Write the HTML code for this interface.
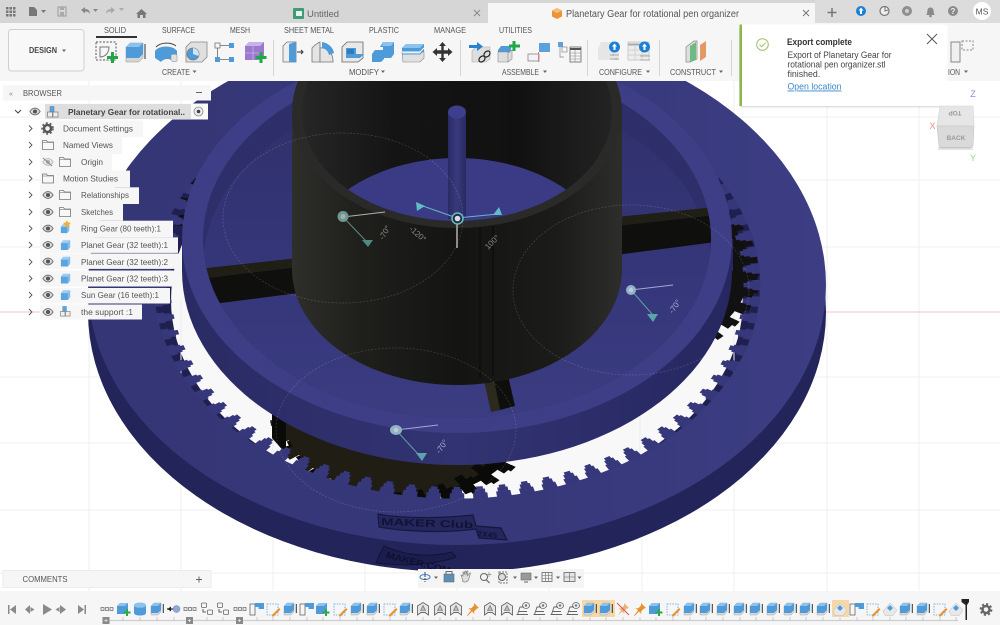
<!DOCTYPE html>
<html><head><meta charset="utf-8"><title>Planetary Gear</title>
<style>html,body{margin:0;padding:0;background:#fff;width:1000px;height:625px;overflow:hidden}svg{display:block}text{font-family:"Liberation Sans",sans-serif}</style></head>
<body>
<svg width="1000" height="625" viewBox="0 0 1000 625" xmlns="http://www.w3.org/2000/svg">
<defs>
<linearGradient id="cyl" x1="0" x2="1" y1="0" y2="0"><stop offset="0" stop-color="#2e2e2b"/><stop offset=".2" stop-color="#1f1f1c"/><stop offset=".5" stop-color="#141413"/><stop offset=".8" stop-color="#1b1b19"/><stop offset="1" stop-color="#2d2d2b"/></linearGradient>
<linearGradient id="inw" x1="0" x2="1" y1="0" y2="0"><stop offset="0" stop-color="#262626"/><stop offset=".3" stop-color="#141414"/><stop offset=".7" stop-color="#111"/><stop offset="1" stop-color="#232323"/></linearGradient>
<linearGradient id="pin" x1="0" x2="1" y1="0" y2="0"><stop offset="0" stop-color="#2a2b66"/><stop offset=".5" stop-color="#383a7c"/><stop offset="1" stop-color="#292a62"/></linearGradient>
<linearGradient id="dtop" x1="0" x2="1" y1="0" y2="0"><stop offset="0" stop-color="#353676"/><stop offset=".6" stop-color="#37387a"/><stop offset="1" stop-color="#3c3d83"/></linearGradient>
<linearGradient id="cside" x1="0" x2="1" y1="0" y2="0"><stop offset="0" stop-color="#2a2b64"/><stop offset=".5" stop-color="#323372"/><stop offset="1" stop-color="#262760"/></linearGradient>
<linearGradient id="flr" x1="0" x2="0" y1="0" y2="1"><stop offset="0" stop-color="#2f3068"/><stop offset=".5" stop-color="#35367a"/><stop offset="1" stop-color="#3c3d82"/></linearGradient>
<clipPath id="lens"><ellipse cx="457" cy="112" rx="155" ry="109"/></clipPath>
<clipPath id="rimc"><ellipse cx="457" cy="239" rx="254" ry="179"/></clipPath>
<clipPath id="view"><rect x="0" y="81" width="1000" height="510"/></clipPath>

<g id="dteeth" fill="none">
<circle r="299.5" stroke-width="8" stroke-dasharray="14.6 8.922" stroke-dashoffset="7.3"/>
<circle r="293" stroke-width="6" stroke-dasharray="10.5 12.512" stroke-dashoffset="5.25"/>
<circle r="288.5" stroke-width="4" stroke-dasharray="6.5 16.159" stroke-dashoffset="3.25"/>
</g>

<symbol id="eye" viewBox="0 0 14 10"><path d="M1 5C3 2 5 1 7 1s4 1 6 4c-2 3-4 4-6 4S3 8 1 5z" fill="#dcdcdc" stroke="#666" stroke-width="1"/><circle cx="7" cy="5" r="2.4" fill="#555"/></symbol>
<symbol id="fold" viewBox="0 0 12 10"><path d="M.5 9.5V.5h4l1 1.5h6v7.5z" fill="#f7f7f7" stroke="#777" stroke-width=".8"/><path d="M.5 2.5h11" stroke="#777" stroke-width=".6"/></symbol>
<symbol id="cube" viewBox="0 0 12 12"><path d="M1 4l2.5-3H11v7.5L8.5 11.500H1z" fill="#5aa5e0"/><path d="M8.500 4L11 1v7.500l-2.500 3z" fill="#86bdea"/><path d="M1 4l2.500-3H11L8.500 4z" fill="#9ccdf2"/></symbol>
<symbol id="comp" viewBox="0 0 12 12"><rect x="3" y=".5" width="4" height="5" fill="#5aa5e0" stroke="#4a7ea8" stroke-width=".5"/><rect x=".5" y="6" width="5" height="5" fill="#eee" stroke="#777" stroke-width=".7"/><rect x="6" y="6" width="5" height="5" fill="#eee" stroke="#777" stroke-width=".7"/></symbol>

<symbol id="e" viewBox="0 0 16 16"><path d="M2 5l3-3h7v9l-3 3H2z" fill="#d8d8d8" stroke="#aaa" stroke-width=".5"/><path d="M2 5l3-3h7v7l-3 3H2z" fill="#4f9bd9"/><path d="M2 5l3-3h7L9 5z" fill="#8cc3ee"/><path d="M14.300 3v9" stroke="#333" stroke-width="1"/></symbol>
<symbol id="n" viewBox="0 0 16 16"><path d="M1 5l3-3h8v8l-3 3H1z" fill="#4f9bd9"/><path d="M1 5l3-3h8L9 5z" fill="#8cc3ee"/><path d="M11 8v7M7.500 11.500h7" stroke="#2aa84a" stroke-width="2"/></symbol>
<symbol id="c" viewBox="0 0 16 16"><ellipse cx="8" cy="4" rx="6" ry="2.500" fill="#8cc3ee"/><path d="M2 4v8c0 1.500 2.500 2.500 6 2.500s6-1 6-2.500V4c0 1.500-2.500 2.500-6 2.500S2 5.500 2 4z" fill="#4f9bd9"/></symbol>
<symbol id="j" viewBox="0 0 16 16"><path d="M1 8h6" stroke="#222" stroke-width="1.200"/><path d="M5 5.500v5L1.500 8z" fill="#222"/><circle cx="10.500" cy="8" r="3.500" fill="#8ea7d8" stroke="#6f88b8" stroke-width=".5"/></symbol>
<symbol id="o" viewBox="0 0 16 16"><g fill="#eee" stroke="#777" stroke-width=".8"><rect x="2" y="6.500" width="3" height="3"/><rect x="6.500" y="6.500" width="3" height="3"/><rect x="11" y="6.500" width="3" height="3"/></g></symbol>
<symbol id="l" viewBox="0 0 16 16"><g fill="#f5f5f5" stroke="#666" stroke-width=".8"><rect x="2.500" y="2" width="5" height="4.500" rx="1"/><rect x="8.500" y="9" width="5" height="4.500" rx="1"/></g><path d="M4 8v3h3" stroke="#333" fill="none" stroke-width=".8"/></symbol>
<symbol id="f" viewBox="0 0 16 16"><rect x="1" y="3" width="5" height="11" fill="#f6f6f6" stroke="#666" stroke-width=".8"/><path d="M6 2h9v6H9.500V6H6z" fill="#4f9bd9"/></symbol>
<symbol id="s" viewBox="0 0 16 16"><rect x="2" y="3" width="11" height="11" fill="none" stroke="#5aa0d6" stroke-width=".8" stroke-dasharray="1.500 1.200"/><path d="M7 14l7-7 1.500 1.500-7 7H7z" fill="#e8932e"/></symbol>
<symbol id="a" viewBox="0 0 16 16"><path d="M2.500 14V5l5.500-3.500L13.500 5v9L10 11.500H6z" fill="#e6e6e6" stroke="#666" stroke-width=".9"/><path d="M8 4.500l2.500 5h-5z" fill="#bbb" stroke="#666" stroke-width=".6"/></symbol>
<symbol id="p" viewBox="0 0 16 16"><path d="M9 2l5 5-2 .5-3 3 .5 2.500L7 10.500 2.500 15 2 14.500 6 9.500 3.500 7l2.500.5 3-3z" fill="#e8912f"/></symbol>
<symbol id="x" viewBox="0 0 16 16"><path d="M9 2l5 5-2 .5-3 3 .5 2.500L7 10.500 3 14.500 6 9.500 3.500 7l2.500.5 3-3z" fill="#ecb27a"/><path d="M2 2l12 12" stroke="#d9534f" stroke-width="1"/></symbol>
<symbol id="k" viewBox="0 0 16 16"><ellipse cx="11" cy="4.500" rx="3.500" ry="3" fill="#eee" stroke="#666" stroke-width=".8"/><circle cx="11" cy="4.500" r="1.200" fill="#777"/><path d="M2.500 13.500L5 6h4M1.500 13.500H13M3 10.500h9" fill="none" stroke="#666" stroke-width=".9"/></symbol>
<symbol id="g" viewBox="0 0 16 16"><path d="M1 10l7-8 7 7-4 5.500H3z" fill="#e8e8e8" stroke="#bbb" stroke-width=".5"/><path d="M5 7l3-3 3 3-3 3zM7 7l1-1 1 1-1 1z" fill="#4f9bd9"/></symbol>
</defs>

<!-- background grid -->
<rect width="1000" height="625" fill="#fff"/>
<g stroke="#efefef" stroke-width="1">
<path d="M89 80V600M181 80V600M273 80V600M365 80V600M457 80V600M549 80V600M642 80V600M734 80V600M827 80V600M919 80V600"/>
<path d="M0 117H1000M0 180H1000M0 247H1000M0 377H1000M0 443H1000M0 510H1000M0 573H1000"/>
</g>
<path d="M0 312H1000" stroke="#f2c6cc" stroke-width="1"/>

<g clip-path="url(#view)">
<!-- outer ring side + hole wall -->
<ellipse cx="457" cy="312" rx="369" ry="260" fill="#23245a"/>
<ellipse cx="457" cy="285" rx="303" ry="213.600" fill="#1f2050"/>
<ellipse cx="457" cy="300" rx="286" ry="202" fill="#f8f8f8"/>
<path d="M273 300V480M181 300V420M734 300V420M640 300V480" stroke="#ececec" stroke-width="1"/>

<!-- planet gears -->
<g transform="translate(408 418) scale(1 .68)" fill="#0a0a09" stroke="#0a0a09"><circle r="117"/><circle r="121" fill="none" stroke-width="10" stroke-dasharray="14 9.76"/><circle r="127" fill="none" stroke-width="5" stroke-dasharray="8 16.93"/></g>
<g transform="translate(392 408) scale(.95 .72)" fill="#1f1d14" stroke="#1f1d14"><circle r="117"/><circle r="121" fill="none" stroke-width="10" stroke-dasharray="14 9.76"/><circle r="127" fill="none" stroke-width="5" stroke-dasharray="8 16.93"/></g>
<path d="M272 414h14v40l-14-16z" fill="#0a0a09"/>
<g transform="translate(632 270) scale(1 .72)" fill="#111" stroke="#111"><circle r="117"/><circle r="121" fill="none" stroke-width="10" stroke-dasharray="14 9.76"/><circle r="127" fill="none" stroke-width="5" stroke-dasharray="8 16.93"/></g>
<g transform="translate(305 208) scale(1 .72)" fill="#111" stroke="#111"><circle r="117"/><circle r="121" fill="none" stroke-width="10" stroke-dasharray="14 9.76"/><circle r="127" fill="none" stroke-width="5" stroke-dasharray="8 16.93"/></g>

<!-- outer ring top face -->
<path fill-rule="evenodd" fill="url(#dtop)" d="M88 285a369 260 0 1 0 738 0a369 260 0 1 0-738 0zM154 285a303 213.600 0 1 1 606 0a303 213.600 0 1 1-606 0z"/>
<g transform="translate(457 285) scale(1 .705)" stroke="#37387b"><use href="#dteeth"/></g>

<!-- logos -->
<g>
<path d="M378 514c20 4 60 5 95 1l3 11 25 2 6 12-28-2-3-9c-30 4-70 3-97-2z" fill="#25265c" stroke="#16173e" stroke-width="1.200"/>
<text x="381" y="525" font-size="10" font-weight="bold" fill="#111234" textLength="92" lengthAdjust="spacingAndGlyphs" transform="rotate(2 381 525)">MAKER Club</text>
<text x="477" y="536" font-size="7.500" font-weight="bold" fill="#111234" textLength="20" lengthAdjust="spacingAndGlyphs" transform="rotate(6 477 536)">2X45</text>
<path d="M384 546c-3 6-6 12-8 17 25 3 55 3 80-6l-4-5c-25 6-48 3-68-6z" fill="#1c1d4c" stroke="#121338" stroke-width="1"/>
<text x="388" y="558" font-size="9" font-weight="bold" fill="#0f1030" textLength="66" lengthAdjust="spacingAndGlyphs" transform="rotate(14 388 548)">MAKER.COM</text>
</g>

<!-- carrier plate -->
<ellipse cx="457" cy="271" rx="275" ry="194" fill="url(#cside)"/>
<path d="M182 239h551v32H182z" fill="url(#cside)"/>
<ellipse cx="457" cy="239" rx="275" ry="194" fill="#3d3e85"/>
<ellipse cx="457" cy="239" rx="254" ry="179" fill="#2d2e6a"/>
<g clip-path="url(#rimc)">
<ellipse cx="457" cy="266" rx="254" ry="179" fill="url(#flr)"/>
<!-- spokes -->
<path d="M198 269l100-11v9l-100 12z" fill="#201f16"/>
<path d="M198 279l100-12v26l-100 13z" fill="#0f0f0d"/>
<path d="M616 217l100-10v8l-100 11z" fill="#201f16"/>
<path d="M616 226l100-11v27l-100 13z" fill="#0f0f0d"/>
<path d="M480 362l10-2 10 50-9 2z" fill="#2b2a1c"/>
<path d="M490 360l14-2 11 48-15 4z" fill="#0e0e0d"/>
</g>

<!-- central cylinder -->
<path d="M292 112V269A165 116 0 0 0 622 269V112z" fill="url(#cyl)"/>
<path d="M480 228V378M493 226V376" stroke="#080808" stroke-width="1"/>
<ellipse cx="457" cy="112" rx="165" ry="116" fill="#2a2a28"/>
<ellipse cx="457" cy="112" rx="155" ry="109" fill="url(#inw)"/>
<ellipse cx="457" cy="267" rx="155" ry="109" fill="#3a3b84" clip-path="url(#lens)"/>
<rect x="448" y="112" width="18" height="107" fill="url(#pin)"/>
<ellipse cx="457" cy="112" rx="9" ry="6.500" fill="#3e3f8c"/>

<!-- construction circles -->
<g fill="none" stroke="#fff" stroke-opacity=".18" stroke-width=".7" stroke-dasharray="2 1.500">
<ellipse cx="343" cy="218" rx="120" ry="85"/>
<ellipse cx="631" cy="290" rx="118" ry="85"/>
<ellipse cx="396" cy="430" rx="120" ry="82"/>
</g>

<!-- joints -->
<g>
<path d="M343 217l42-5" stroke="#a9b5b0" stroke-width="1"/><path d="M343 217l23 24" stroke="#5d8c83" stroke-width="1"/><path d="M362 240h11l-5 7z" fill="#4f8a7e"/>
<circle cx="343" cy="216.500" r="5.500" fill="#6d9a90"/><circle cx="343" cy="216.500" r="2.500" fill="#a8b0ac"/>
<path d="M631 290l42-5" stroke="#a3a8d2" stroke-width="1"/><path d="M631 290l21 24" stroke="#5d9ca8" stroke-width="1"/><path d="M647 314h11l-5 8z" fill="#5aa4ac"/>
<circle cx="631" cy="290" r="5" fill="#8fb4c4"/><circle cx="631" cy="290" r="2.200" fill="#c3c8dc"/>
<path d="M396 430l42-5" stroke="#a3a8d2" stroke-width="1"/><path d="M396 430l22 24" stroke="#5d9ca8" stroke-width="1"/><path d="M416 453h11l-5 8z" fill="#5aa4ac"/>
<ellipse cx="396" cy="430" rx="6" ry="5" fill="#8fb4c4"/><circle cx="396" cy="430" r="2.200" fill="#c3c8dc"/>
<path d="M457 218L420 205M457 218l41-4" stroke="#62b6c8" stroke-width="1"/>
<path d="M457 219V248" stroke="#d8d8d8" stroke-width="1.200"/>
<path d="M416 202l9 4-8 5z" fill="#62bcc8"/><path d="M499 207l3 8-9 0z" fill="#62bcc8"/>
<circle cx="457.500" cy="218.500" r="5.500" fill="#27303c" stroke="#62bcc8" stroke-width="1.500"/><circle cx="457.500" cy="218.500" r="2.800" fill="#dcd9f0"/>
</g>
<g font-size="8" fill="#a9a9a9">
<text transform="translate(387 234) rotate(-60)" text-anchor="middle" fill="#8c8c8c">-70°</text>
<text transform="translate(416 236) rotate(42)" text-anchor="middle" fill="#8c8c8c">-120°</text>
<text transform="translate(494 244) rotate(-45)" text-anchor="middle" fill="#8c8c8c">100°</text>
<text transform="translate(677 308) rotate(-55)" text-anchor="middle" fill="#aeb0d4">-70°</text>
<text transform="translate(444 448) rotate(-55)" text-anchor="middle" fill="#aeb0d4">-70°</text>
</g>
</g>

<!-- top bar -->
<rect width="1000" height="23" fill="#d6d6d6"/>
<rect x="815" y="0" width="185" height="23" fill="#dcdcdc"/>
<rect x="488" y="3" width="327" height="20" fill="#f6f6f6"/>
<rect y="23" width="1000" height="58" fill="#f6f6f6"/>

<g fill="#777">
<path d="M6 7h2.500v2.500H6zM9.500 7H12v2.500H9.500zM13 7h2.500v2.500H13zM6 10.500h2.500V13H6zM9.500 10.500H12V13H9.500zM13 10.500h2.500V13H13zM6 14h2.500v2.500H6zM9.500 14H12v2.500H9.500zM13 14h2.500v2.500H13z"/>
<path d="M29 7h5l3 3v6h-8z"/><path d="M41 10h5l-2.500 3z"/>
<path d="M58 7h8v9h-8z" fill="none" stroke="#999"/><path d="M60 7h4v3h-4zM60 12h4v4h-4z" fill="#aaa"/>
<path d="M81 10l4-3v2c3 0 5 1.500 5 5-1-2-2.500-2.500-5-2.500v2z" fill="#888"/><path d="M93 9h5l-2.500 3z" fill="#888"/>
<path d="M115 10l-4-3v2c-3 0-5 1.500-5 5 1-2 2.500-2.500 5-2.500v2z" fill="#aaa"/><path d="M119 8h5l-2.500 3z" fill="#aaa"/>
<path d="M136 14l5.500-5 5.500 5h-1.500v4h-2.500v-3h-3v3h-2.500v-4z" fill="#777"/>
</g>
<rect x="293" y="8" width="11" height="11" fill="#3f9c76" rx="1"/><rect x="296" y="11" width="6" height="5" fill="#e8f2ee"/>
<text x="307" y="17" font-size="9.500" fill="#666" textLength="32" lengthAdjust="spacingAndGlyphs">Untitled</text>
<path d="M474 10l6 6M480 10l-6 6" stroke="#888" stroke-width="1"/>
<path d="M557 8l5 2.500v6L557 19l-5-2.500v-6z" fill="#ee9438"/><path d="M552 10.500l5 2.500 5-2.500-5-2.500z" fill="#f7bd7e"/>
<text x="566" y="17" font-size="10" fill="#555" textLength="173" lengthAdjust="spacingAndGlyphs">Planetary Gear for rotational pen organizer</text>
<path d="M803 10l6 6M809 10l-6 6" stroke="#777" stroke-width="1"/>
<path d="M832 8v9M827.500 12.500h9" stroke="#777" stroke-width="1.500"/>
<circle cx="861" cy="11" r="5" fill="#1c7fd6"/><path d="M861 7.500l2.500 3h-1.500v3.500h-2v-3.500h-1.500z" fill="#fff"/>
<circle cx="884.500" cy="11" r="4.500" fill="#eee" stroke="#777" stroke-width="1.200"/><path d="M885 7v4l3-1" fill="none" stroke="#777"/>
<circle cx="907" cy="11" r="5" fill="#8f8f8f"/><circle cx="907" cy="11" r="2" fill="#d0d0d0"/>
<path d="M926 15c1.500-1 1-3 1.500-5s2-2.500 3-2.500 2.500.500 3 2.500 0 4 1.500 5z" fill="#8a8a8a"/><circle cx="930.500" cy="16" r="1.300" fill="#8a8a8a"/>
<circle cx="953" cy="11" r="5" fill="#8a8a8a"/><text x="953" y="14" font-size="8" font-weight="bold" fill="#eee" text-anchor="middle">?</text>
<circle cx="982" cy="11" r="9" fill="#fff"/><text x="982" y="14.500" font-size="8.500" fill="#555" text-anchor="middle">MS</text>

<!-- toolbar -->
<rect x="8.500" y="29.500" width="75.500" height="41.500" rx="3" fill="#f8f8f8" stroke="#cfcfcf"/>
<text x="29" y="53" font-size="8.500" font-weight="bold" fill="#444" textLength="28" lengthAdjust="spacingAndGlyphs">DESIGN</text><path d="M62 49.500h4l-2 2.500z" fill="#666"/>
<g font-size="8.200" fill="#555">
<text x="104" y="33" textLength="22" lengthAdjust="spacingAndGlyphs">SOLID</text>
<text x="162" y="33" textLength="33" lengthAdjust="spacingAndGlyphs">SURFACE</text>
<text x="230" y="33" textLength="20" lengthAdjust="spacingAndGlyphs">MESH</text>
<text x="284" y="33" textLength="50" lengthAdjust="spacingAndGlyphs">SHEET METAL</text>
<text x="369" y="33" textLength="30" lengthAdjust="spacingAndGlyphs">PLASTIC</text>
<text x="434" y="33" textLength="32" lengthAdjust="spacingAndGlyphs">MANAGE</text>
<text x="499" y="33" textLength="33" lengthAdjust="spacingAndGlyphs">UTILITIES</text>
<text x="162" y="75" textLength="28" lengthAdjust="spacingAndGlyphs">CREATE</text>
<text x="349" y="75" textLength="30" lengthAdjust="spacingAndGlyphs">MODIFY</text>
<text x="502" y="75" textLength="37" lengthAdjust="spacingAndGlyphs">ASSEMBLE</text>
<text x="599" y="75" textLength="43" lengthAdjust="spacingAndGlyphs">CONFIGURE</text>
<text x="670" y="75" textLength="46" lengthAdjust="spacingAndGlyphs">CONSTRUCT</text>
<text x="948" y="75" textLength="12" lengthAdjust="spacingAndGlyphs">ION</text>
</g>
<g fill="#666"><path d="M192.500 70.500h4l-2 2.500zM381 70.500h4l-2 2.500zM543 70.500h4l-2 2.500zM646 70.500h4l-2 2.500zM719 70.500h4l-2 2.500zM964 70.500h4l-2 2.500z"/></g>
<rect x="96" y="36" width="41" height="2" fill="#333"/>
<path d="M273.500 40V76M460.500 40V76M587.500 40V76M659.500 40V76M731.500 40V76" stroke="#d5d5d5"/>

<!-- create -->
<rect x="96" y="42" width="20" height="18" fill="none" stroke="#555" stroke-width="1" stroke-dasharray="2 1.500"/><path d="M100 47h9c0 6-4 10-9 10z" fill="none" stroke="#777"/><path d="M112.500 52v11M107 57.500h11" stroke="#1fa845" stroke-width="3"/>
<path d="M126 47l4-4h13v15l-4 4h-13z" fill="#d4d4d4" stroke="#999" stroke-width=".5"/><path d="M126 47l4-4h13v11l-4 4h-13z" fill="#4f9bd9"/><path d="M126 47l4-4h13l-4 4z" fill="#8cc3ee"/><path d="M145 44v15" stroke="#333"/>
<path d="M155 51c4-6 18-6 22 0v7l-4 4c-2-4-9-4-12 0l-6-4z" fill="#4f9bd9"/><path d="M171 55c1-1 5-1 6 0v6c-2 1-5 1-6-1z" fill="#e0e0e0" stroke="#888" stroke-width=".5"/><path d="M156 47c5-5 15-5 20-1" fill="none" stroke="#444" stroke-width="1"/>
<path d="M186 47l5-5h16v15l-5 5h-16z" fill="#e0e0e0" stroke="#888" stroke-width=".8"/><circle cx="193" cy="54" r="6" fill="#4f9bd9" stroke="#777" stroke-width=".8"/><path d="M193 54v-6a6 6 0 0 1 5.500 8z" fill="#cfe4f4"/>
<rect x="215" y="43" width="5" height="5" fill="#f6f6f6" stroke="#777" stroke-width=".8"/><rect x="229" y="43" width="5" height="5" fill="#4f9bd9"/><rect x="215" y="57" width="5" height="5" fill="#4f9bd9"/><rect x="229" y="57" width="5" height="5" fill="#4f9bd9"/><path d="M220 45.500h9M220 59.500h9M217.500 48v9" stroke="#666" stroke-width=".8"/>
<path d="M245 46l4-4h15v14l-4 4h-15z" fill="#9b79cf"/><path d="M245 46l4-4h15l-4 4z" fill="#c9b2e8"/><path d="M253 46v14M245 53h15" stroke="#c6b2e4" stroke-width=".8"/><path d="M261 52v11M255.500 57.500h11" stroke="#1fa845" stroke-width="3"/>

<!-- modify -->
<path d="M283 46l4-4h9v20h-13z" fill="#eee" stroke="#777" stroke-width=".8"/><path d="M289 44l7-2v20h-7z" fill="#4f9bd9"/><path d="M297 52h6m-2-2l2 2-2 2" stroke="#333" fill="none"/>
<path d="M312 48c3-3 5-5 8-6v20h-8z" fill="#e4e4e4" stroke="#777" stroke-width=".8"/><path d="M320 62V48c5-1 12 2 13 12v2z" fill="#e4e4e4" stroke="#777" stroke-width=".8"/><path d="M322 42c6 1 11 5 12 11l-5 2c-1-4-3-6-7-7z" fill="#4f9bd9"/>
<path d="M342 47l5-5h16v16l-5 4h-16z" fill="#e8e8e8" stroke="#666" stroke-width=".8"/><path d="M346 48h10v6h8l-4 4h-14z" fill="#4f9bd9"/><path d="M347 49h7v5h-7z" fill="#2f7cbc"/>
<path d="M380 47l3-5h11v12l-3 4h-8v-11z" fill="#4f9bd9"/><path d="M372 54l3-4h9v9l-3 3h-9z" fill="#4d9ad8"/><path d="M383 42h11l-3 4h-9z" fill="#8cc3ee"/>
<path d="M402 48l4-4h18v8l-4 4h-18z" fill="#4f9bd9"/><path d="M402 48l4-4h18l-4 4z" fill="#8cc3ee"/><path d="M402 52l1 10h17l4-4v-6z" fill="#e0e0e0" stroke="#888" stroke-width=".6"/><path d="M402 54h18l4-4" stroke="#4f9bd9" fill="none" stroke-width="1"/><path d="M402 52h18l4-4" stroke="#fff" fill="none"/>
<path d="M442.500 42l3.500 4h-2.300v4.300H448V48l4.500 4-4.500 4v-2.300h-4.300V58H446l-3.500 4-3.500-4h2.300v-4.300H437V56l-4.500-4 4.500-4v2.300h4.300V46H439z" fill="#333"/>

<!-- assemble -->
<path d="M472 51l4-4h14v12l-4 3h-14z" fill="#dedede" stroke="#aaa" stroke-width=".6"/><path d="M469 45h8v-3l6 4.500-6 4.500v-3h-8z" fill="#2584d2"/><ellipse cx="482" cy="59" rx="3.500" ry="2.500" fill="none" stroke="#222" stroke-width="1.200" transform="rotate(-45 482 59)"/><ellipse cx="487" cy="54" rx="3.500" ry="2.500" fill="none" stroke="#222" stroke-width="1.200" transform="rotate(-45 487 54)"/>
<path d="M498 50l3-4h10v10l-3 3h-10z" fill="#4f9bd9"/><path d="M498 52h10v10h-10zM508 53l4-3v9l-4 3z" fill="#dedede" stroke="#888" stroke-width=".6"/><path d="M514 41v10M509 46h11" stroke="#1fa845" stroke-width="3"/>
<rect x="528" y="54" width="11" height="7" fill="#f3f3f3" stroke="#888" stroke-width=".8"/><rect x="539" y="43" width="11" height="9" fill="#5ba1dc"/><path d="M538.500 52v10" stroke="#e27e7e"/>
<rect x="558" y="42" width="5" height="5" fill="#5ba1dc"/><rect x="562" y="47" width="5" height="5" fill="#f6f6f6" stroke="#777" stroke-width=".6"/><path d="M560 47v10h4M560 62h0" stroke="#888" fill="none" stroke-width=".7"/><rect x="570" y="47" width="11" height="15" fill="#f6f6f6" stroke="#666" stroke-width=".8"/><path d="M570 48h11v2h-11z" fill="#555"/><path d="M570 53h11M570 56h11M570 59h11M575 50v12" stroke="#888" stroke-width=".6"/>

<!-- configure -->
<path d="M598 49l3-7h18v18h-21z" fill="#e6e6e6"/><circle cx="614.500" cy="47" r="5.500" fill="#1c7fd6"/><path d="M614.500 43.500l2.500 3h-1.500v3.500h-2v-3.500h-1.500z" fill="#fff"/><path d="M610 55h9M610 59h9" stroke="#aaa"/><circle cx="613" cy="55" r="1.200" fill="#bbb"/><circle cx="616" cy="59" r="1.200" fill="#bbb"/>
<rect x="628" y="42" width="21" height="18" fill="#ededed" stroke="#ccc"/><path d="M628 44.500h21" stroke="#aaa" stroke-width="2"/><path d="M628 50h21M628 55h21M635 45v15M642 45v15" stroke="#c8c8c8" stroke-width=".7"/><circle cx="644.500" cy="47" r="5.500" fill="#1c7fd6"/><path d="M644.500 43.500l2.500 3h-1.500v3.500h-2v-3.500h-1.500z" fill="#fff"/><path d="M640 56h10M640 60h10" stroke="#aaa"/>

<!-- construct -->
<path d="M686 47l8-6h3v18l-7 3h-4z" fill="#dedede" stroke="#888" stroke-width=".7"/><path d="M690 46l6-4v18l-6 2z" fill="#6dbb80"/><path d="M700 45l6-4v16l-6 4z" fill="#e29a62"/>

<!-- inspect remnant -->
<rect x="951" y="42" width="9" height="20" fill="#f0f0f0" stroke="#888"/><rect x="962" y="41" width="11" height="9" fill="none" stroke="#888" stroke-dasharray="2 1.500"/>

<!-- notification -->
<rect x="739" y="24.500" width="208.500" height="81.500" rx="3" fill="#000" opacity=".12" transform="translate(0 1.500)"/>
<rect x="739.500" y="24.500" width="208" height="81.500" rx="2" fill="#fff"/>
<rect x="739.500" y="24.500" width="2.500" height="81.500" fill="#8db74a"/>
<circle cx="762.500" cy="44.500" r="5.800" fill="none" stroke="#9ebf6c" stroke-width="1"/><path d="M759.500 44.500l2.200 2.200 3.800-4" fill="none" stroke="#9ebf6c"/>
<text x="787" y="45" font-size="9" font-weight="bold" fill="#333" textLength="65" lengthAdjust="spacingAndGlyphs">Export complete</text>
<g font-size="8.800" fill="#444"><text x="787.500" y="58" textLength="104" lengthAdjust="spacingAndGlyphs">Export of Planetary Gear for</text><text x="787.500" y="67.500" textLength="98" lengthAdjust="spacingAndGlyphs">rotational pen organizer.stl</text><text x="787.500" y="77">finished.</text></g>
<text x="787.500" y="89.500" font-size="9" fill="#3a88c8" text-decoration="underline" textLength="54" lengthAdjust="spacingAndGlyphs">Open location</text>
<path d="M927 34l10 10M937 34l-10 10" stroke="#555" stroke-width="1"/>

<!-- view cube -->
<path d="M937 126l3-20h33l1 19z" fill="#e6e6e6" stroke="#d4d4d4" stroke-width=".6"/>
<path d="M937 126h37l-1 20-3 2h-29l-2-2z" fill="#dadada" stroke="#c4c4c4" stroke-width=".6"/>
<rect x="938" y="147" width="35" height="3" fill="#999" opacity=".25"/>
<text transform="translate(955 111) rotate(180)" font-size="6.500" font-weight="bold" fill="#999" text-anchor="middle">TOP</text>
<text x="956" y="140" font-size="6.500" font-weight="bold" fill="#999" text-anchor="middle">BACK</text>
<text x="973" y="97" font-size="9" fill="#8a8aea" text-anchor="middle">Z</text><text x="932.500" y="129" font-size="9" fill="#ea8a8a" text-anchor="middle">X</text><text x="973" y="161" font-size="9" fill="#8fd49c" text-anchor="middle">Y</text>

<!-- browser -->
<rect x="3" y="85.500" width="208" height="15" fill="#f6f6f6"/>
<text x="9" y="96" font-size="7" fill="#888">«</text>
<text x="23" y="96" font-size="8.500" fill="#555" textLength="39" lengthAdjust="spacingAndGlyphs">BROWSER</text>
<path d="M196 92.500h6" stroke="#666"/>
<rect x="28" y="103.500" width="180" height="16" fill="#fafafa"/>
<rect x="45" y="104" width="146" height="15" fill="#dedede"/>
<path d="M15 110l3 3 3-3" fill="none" stroke="#444"/>
<use href="#eye" x="29" y="107" width="12" height="9"/>
<use href="#comp" x="47" y="106" width="12" height="12"/>
<text x="68" y="115" font-size="8.500" font-weight="bold" fill="#444" textLength="117" lengthAdjust="spacingAndGlyphs">Planetary Gear for rotational..</text>
<circle cx="198.500" cy="111.500" r="4.500" fill="#eee" stroke="#888" stroke-width=".8"/><circle cx="198.500" cy="111.500" r="1.800" fill="#444"/>

<g fill="#f6f6f6">
<rect x="40" y="120.500" width="103" height="16.700"/>
<rect x="40" y="137.200" width="82" height="16.700"/>
<rect x="40" y="153.900" width="72" height="16.700"/>
<rect x="40" y="170.600" width="90" height="16.700"/>
<rect x="40" y="187.300" width="99" height="16.700"/>
<rect x="40" y="204" width="83" height="16.700"/>
<rect x="40" y="220.700" width="133" height="16.700"/>
<rect x="40" y="237.400" width="138" height="15.500"/>
<rect x="40" y="253.400" width="141" height="15.500"/>
<rect x="40" y="270.500" width="141" height="16"/>
<rect x="40" y="288" width="130" height="15.500"/>
<rect x="40" y="304.500" width="102" height="15"/>
</g>
<g fill="none" stroke="#555" stroke-width=".9">
<path d="M29 125.500l3 3-3 3M29 142l3 3-3 3M29 159l3 3-3 3M29 175.500l3 3-3 3M29 192l3 3-3 3M29 209l3 3-3 3M29 225.500l3 3-3 3M29 242l3 3-3 3M29 259l3 3-3 3M29 275.500l3 3-3 3M29 292l3 3-3 3M29 309l3 3-3 3"/>
</g>
<g>
<circle cx="47.500" cy="128.500" r="3.500" fill="none" stroke="#555" stroke-width="2.500"/><circle cx="47.500" cy="128.500" r="5.500" fill="none" stroke="#555" stroke-width="1.500" stroke-dasharray="2 2"/>
<use href="#fold" x="42" y="140" width="12" height="10"/>
<use href="#eye" x="42" y="157.500" width="12" height="9" opacity=".45"/><path d="M43 158l9 8" stroke="#888"/>
<use href="#fold" x="59" y="157" width="12" height="10"/>
<use href="#fold" x="42" y="173.500" width="12" height="10"/>
<use href="#eye" x="42" y="190.500" width="12" height="9"/><use href="#fold" x="59" y="190" width="12" height="10"/>
<use href="#eye" x="42" y="207.500" width="12" height="9"/><use href="#fold" x="59" y="207" width="12" height="10"/>
<use href="#eye" x="42" y="224" width="12" height="9"/><use href="#cube" x="60" y="223" width="10" height="11"/><path d="M67 220l1.200 2.500 2.800.3-2 1.900.5 2.800-2.500-1.300-2.500 1.300.5-2.800-2-1.900 2.800-.3z" fill="#f0b030"/>
<use href="#eye" x="42" y="240.500" width="12" height="9"/><use href="#cube" x="60" y="239.500" width="11" height="11"/>
<use href="#eye" x="42" y="257" width="12" height="9"/><use href="#cube" x="60" y="256" width="11" height="11"/>
<use href="#eye" x="42" y="274" width="12" height="9"/><use href="#cube" x="60" y="273" width="11" height="11"/>
<use href="#eye" x="42" y="290.500" width="12" height="9"/><use href="#cube" x="60" y="289.500" width="11" height="11"/>
<use href="#eye" x="42" y="307.500" width="12" height="9"/><use href="#comp" x="60" y="306" width="11" height="11"/>
</g>
<g font-size="8.500" fill="#555">
<text x="63" y="131.500" textLength="70" lengthAdjust="spacingAndGlyphs">Document Settings</text>
<text x="63" y="148" textLength="50" lengthAdjust="spacingAndGlyphs">Named Views</text>
<text x="81" y="164.800" textLength="22" lengthAdjust="spacingAndGlyphs">Origin</text>
<text x="63" y="181.500" textLength="55" lengthAdjust="spacingAndGlyphs">Motion Studies</text>
<text x="81" y="198" textLength="48" lengthAdjust="spacingAndGlyphs">Relationships</text>
<text x="81" y="214.800" textLength="32" lengthAdjust="spacingAndGlyphs">Sketches</text>
<text x="81" y="231.500" textLength="80" lengthAdjust="spacingAndGlyphs">Ring Gear (80 teeth):1</text>
<text x="81" y="248" textLength="87" lengthAdjust="spacingAndGlyphs">Planet Gear (32 teeth):1</text>
<text x="81" y="264.800" textLength="87" lengthAdjust="spacingAndGlyphs">Planet Gear (32 teeth):2</text>
<text x="81" y="281.500" textLength="87" lengthAdjust="spacingAndGlyphs">Planet Gear (32 teeth):3</text>
<text x="81" y="298" textLength="78" lengthAdjust="spacingAndGlyphs">Sun Gear (16 teeth):1</text>
<text x="81" y="315" textLength="52" lengthAdjust="spacingAndGlyphs">the support :1</text>
</g>

<!-- comments -->
<rect x="3" y="570.500" width="208" height="17" fill="#f6f6f6" stroke="#ececec"/>
<text x="22.500" y="582" font-size="8.500" fill="#555" textLength="45" lengthAdjust="spacingAndGlyphs">COMMENTS</text>
<path d="M199 576.500v6M196 579.500h6" stroke="#666"/>

<!-- nav bar -->
<rect x="418" y="569" width="166" height="19" fill="#f4f4f4"/>
<g>
<ellipse cx="425" cy="577" rx="5" ry="2.500" fill="none" stroke="#3a7cc0" stroke-width="1"/><path d="M425 572v10" stroke="#444" stroke-dasharray="2 1"/><path d="M434 576.500h4l-2 2.500z" fill="#666"/>
<path d="M444 574h10v8h-10z" fill="#5e8fb4" stroke="#666" stroke-width=".6"/><path d="M446 574v-2.500h6v2.500" fill="none" stroke="#666"/>
<path d="M463 581l-2-6 2 1v-4h1v3l1-4h1v4l1-4h1l-.5 5 2-3h1l-2 7c-1 2-5 3-6 1z" fill="#ddd" stroke="#777" stroke-width=".6"/>
<circle cx="484" cy="577" r="3.500" fill="none" stroke="#666"/><path d="M486.500 580l3 3" stroke="#666" stroke-width="1.200"/><path d="M489 572v5M486.500 574.500h5" stroke="#888" stroke-width=".7"/>
<path d="M499 572h8v11h-8z" fill="none" stroke="#777" stroke-dasharray="2 1"/><circle cx="502" cy="577" r="3.500" fill="#ddd" stroke="#666"/><path d="M513 576.500h4l-2 2.500z" fill="#666"/>
<rect x="521" y="573" width="10" height="7" fill="#999" stroke="#666" stroke-width=".6"/><path d="M524 582h4" stroke="#666"/><path d="M534 576.500h4l-2 2.500z" fill="#666"/>
<rect x="542" y="572.500" width="10" height="9" fill="none" stroke="#666" stroke-width=".8"/><path d="M545.300 572.500v9M548.600 572.500v9M542 575.500h10M542 578.500h10" stroke="#666" stroke-width=".6"/><path d="M556 576.500h4l-2 2.500z" fill="#666"/>
<rect x="564" y="572.500" width="11" height="9" fill="#e4e4e4" stroke="#666" stroke-width=".8"/><path d="M569.500 572.500v9M564 577h11" stroke="#666" stroke-width=".6"/><path d="M577.500 576.500h4l-2 2.500z" fill="#666"/>
</g>

<!-- timeline -->
<rect y="591" width="1000" height="34" fill="#f6f6f6"/>
<g fill="#8a8a8a">
<path d="M8 605h1.500v9H8zM16 605v9l-6-4.500z"/>
<path d="M25 609.500l5-4.500v9zM30.500 607l4 2.500-4 2.500z"/>
<path d="M43 604l9 5.500-9 5.500z"/>
<path d="M59.500 607l-4 2.500 4 2.500zM60 605l6 4.500-6 4.500z"/>
<path d="M78 605l6 4.500-6 4.500zM84.500 605H86v9h-1.500z"/>
</g>
<path d="M106 620.500H958" stroke="#cfcfcf" stroke-width="1.200"/>
<path d="M123 617v4M140 617v4M157 617v4M174 617v4M207 617v4M223 617v4M257 617v4M273 617v4M290 617v4M307 617v4M323 617v4M340 617v4M357 617v4M373 617v4M390 617v4M406 617v4M423 617v4M440 617v4M456 617v4M473 617v4M490 617v4M507 617v4M523 617v4M540 617v4M557 617v4M573 617v4M590 617v4M606 617v4M623 617v4M640 617v4M656 617v4M673 617v4M690 617v4M706 617v4M723 617v4M740 617v4M756 617v4M773 617v4M790 617v4M806 617v4M823 617v4M840 617v4M857 617v4M873 617v4M890 617v4M906 617v4M923 617v4M940 617v4M956 617v4" stroke="#bbb" stroke-width=".7"/>
<g fill="#8a8a8a"><rect x="102.500" y="617" width="7" height="7"/><rect x="186" y="617" width="7" height="7"/><rect x="236" y="617" width="7" height="7"/></g>
<path d="M104.500 620.500h3M106 619v3M188 620.500h3M189.500 619v3M238 620.500h3M239.500 619v3" stroke="#eee" stroke-width=".7"/>
<rect x="582" y="600" width="33" height="17" fill="#f6d7a8"/><rect x="832" y="600" width="17" height="17" fill="#f6d7a8"/>
<g>
<use href="#o" x="99" y="601" width="16" height="16"/><use href="#n" x="116" y="601" width="16" height="16"/><use href="#c" x="132" y="601" width="16" height="16"/><use href="#e" x="149" y="601" width="16" height="16"/><use href="#j" x="166" y="601" width="16" height="16"/><use href="#o" x="182" y="601" width="16" height="16"/><use href="#l" x="199" y="601" width="16" height="16"/><use href="#l" x="215" y="601" width="16" height="16"/><use href="#o" x="232" y="601" width="16" height="16"/><use href="#f" x="249" y="601" width="16" height="16"/><use href="#s" x="265" y="601" width="16" height="16"/><use href="#e" x="282" y="601" width="16" height="16"/><use href="#f" x="299" y="601" width="16" height="16"/><use href="#n" x="315" y="601" width="16" height="16"/><use href="#s" x="332" y="601" width="16" height="16"/><use href="#e" x="349" y="601" width="16" height="16"/><use href="#e" x="365" y="601" width="16" height="16"/><use href="#s" x="382" y="601" width="16" height="16"/><use href="#e" x="398" y="601" width="16" height="16"/><use href="#a" x="415" y="601" width="16" height="16"/><use href="#a" x="432" y="601" width="16" height="16"/><use href="#a" x="448" y="601" width="16" height="16"/><use href="#p" x="465" y="601" width="16" height="16"/><use href="#a" x="482" y="601" width="16" height="16"/><use href="#a" x="499" y="601" width="16" height="16"/><use href="#k" x="515" y="601" width="16" height="16"/><use href="#k" x="532" y="601" width="16" height="16"/><use href="#k" x="549" y="601" width="16" height="16"/><use href="#k" x="565" y="601" width="16" height="16"/><use href="#e" x="582" y="601" width="16" height="16"/><use href="#e" x="598" y="601" width="16" height="16"/><use href="#x" x="615" y="601" width="16" height="16"/><use href="#p" x="632" y="601" width="16" height="16"/><use href="#n" x="648" y="601" width="16" height="16"/><use href="#s" x="665" y="601" width="16" height="16"/><use href="#e" x="682" y="601" width="16" height="16"/><use href="#e" x="698" y="601" width="16" height="16"/><use href="#e" x="715" y="601" width="16" height="16"/><use href="#e" x="732" y="601" width="16" height="16"/><use href="#e" x="748" y="601" width="16" height="16"/><use href="#e" x="765" y="601" width="16" height="16"/><use href="#e" x="782" y="601" width="16" height="16"/><use href="#e" x="798" y="601" width="16" height="16"/><use href="#e" x="815" y="601" width="16" height="16"/><use href="#g" x="832" y="601" width="16" height="16"/><use href="#f" x="849" y="601" width="16" height="16"/><use href="#s" x="865" y="601" width="16" height="16"/><use href="#g" x="882" y="601" width="16" height="16"/><use href="#e" x="898" y="601" width="16" height="16"/><use href="#e" x="915" y="601" width="16" height="16"/><use href="#s" x="932" y="601" width="16" height="16"/><use href="#g" x="948" y="601" width="16" height="16"/>
</g>
<path d="M961.500 599h7.500v3l-2 3v15h-1.500V605l-4-3z" fill="#222"/>
<circle cx="986" cy="609.500" r="3.500" fill="none" stroke="#666" stroke-width="2.500"/><circle cx="986" cy="609.500" r="5.500" fill="none" stroke="#666" stroke-width="1.800" stroke-dasharray="2.200 2.100"/>
</svg>
</body></html>
